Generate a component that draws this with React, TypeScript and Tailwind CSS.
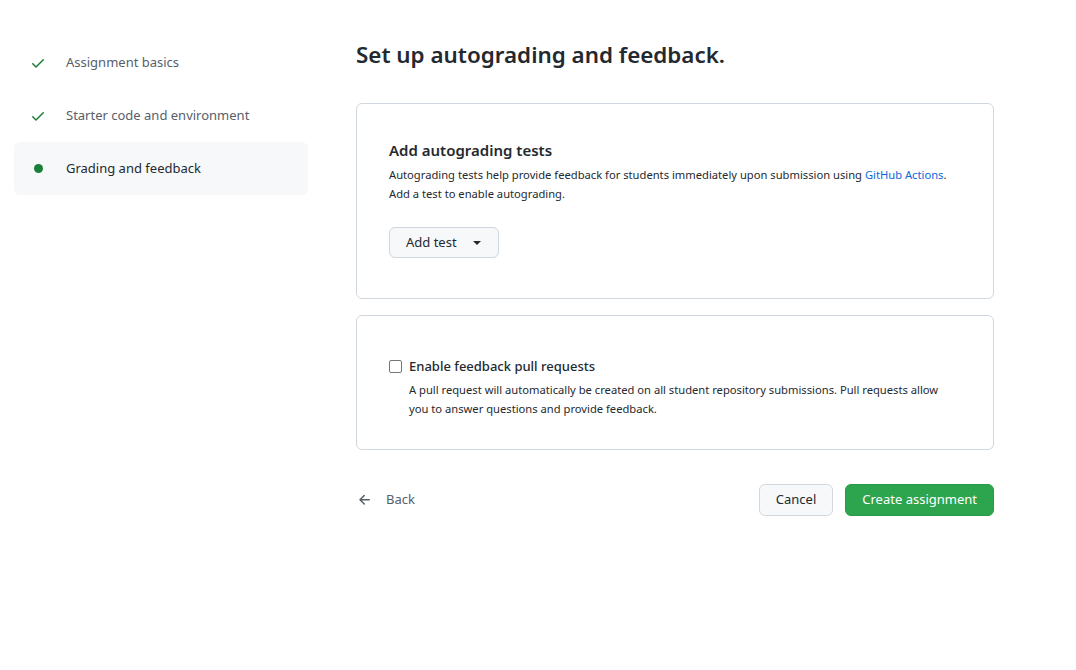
import React from "react";

const font = { fontFamily: '"Noto Sans", "Open Sans", sans-serif' };

function CheckIcon() {
  return (
    <svg width="16" height="16" viewBox="0 0 16 16" fill="#1a7f37">
      <path d="M13.78 4.22a.75.75 0 0 1 0 1.06l-7.25 7.25a.75.75 0 0 1-1.06 0L2.22 9.28a.751.751 0 0 1 .018-1.042.751.751 0 0 1 1.042-.018L6 10.94l6.72-6.72a.75.75 0 0 1 1.06 0Z" />
    </svg>
  );
}

function ArrowLeft() {
  return (
    <svg width="16" height="16" viewBox="0 0 16 16" fill="#57606a">
      <path d="M7.78 12.53a.75.75 0 0 1-1.06 0L2.47 8.28a.75.75 0 0 1 0-1.06l4.25-4.25a.751.751 0 0 1 1.042.018.751.751 0 0 1 .018 1.042L4.81 7h7.44a.75.75 0 0 1 0 1.5H4.81l2.97 2.97a.75.75 0 0 1 0 1.06Z" />
    </svg>
  );
}

const steps = [
  { label: "Assignment basics", done: true },
  { label: "Starter code and environment", done: true },
  { label: "Grading and feedback", done: false },
];

export default function App() {
  return (
    <div className="min-h-[670px] bg-white text-[#24292f] flex px-[14px] pt-[36px]" style={font}>
      {/* Sidebar steps */}
      <nav className="w-[294px] shrink-0 flex flex-col">
        {steps.map((s) => (
          <div
            key={s.label}
            className={`h-[53px] flex items-center rounded-md ${s.done ? "" : "bg-[#f6f8fa]"}`}
          >
            <span className="w-[48px] mr-[4px] flex justify-center">
              {s.done ? <CheckIcon /> : <span className="w-[9px] h-[9px] rounded-full bg-[#1a7f37]" />}
            </span>
            <span className={`text-[13px] ${s.done ? "text-[#57606a]" : "text-[#24292f]"}`}>{s.label}</span>
          </div>
        ))}
      </nav>

      {/* Main */}
      <main className="ml-[48px] w-[638px] flex flex-col">
        <h1 className="mt-[1px] text-[22.4px] leading-[36px] font-semibold">Set up autograding and feedback.</h1>

        <section className="mt-[30px] border border-[#d0d7de] rounded-md px-8 pt-[34px] pb-[40px]">
          <h2 className="text-[15px] leading-[24px] font-semibold">Add autograding tests</h2>
          <p className="mt-[3px] text-[11.2px] leading-[19px]">
            Autograding tests help provide feedback for students immediately upon submission using{" "}
            <span className="text-[#0969da]">GitHub Actions</span>.
            <br />
            Add a test to enable autograding.
          </p>
          <button className="mt-[24px] h-[31px] w-[110px] border border-[#d0d7de] bg-[#f6f8fa] rounded-md flex items-center pl-4 text-[13px] text-[#24292f]">
            Add test
            <span className="ml-[16px] w-0 h-0 border-l-[4px] border-r-[4px] border-t-[4px] border-l-transparent border-r-transparent border-t-[#24292f]" />
          </button>
        </section>

        <section className="mt-4 border border-[#d0d7de] rounded-md px-8 pt-[40px] pb-[31px]">
          <label className="flex items-center gap-[7px] text-[13px] leading-[20px] font-medium">
            <span className="w-[13px] h-[13px] border border-[#767676] rounded-[2px] bg-white" />
            Enable feedback pull requests
          </label>
          <p className="mt-[4px] ml-[20px] text-[11.2px] leading-[19px] pr-[8px]">
            A pull request will automatically be created on all student repository submissions. Pull requests allow
            you to answer questions and provide feedback.
          </p>
        </section>

        <div className="mt-[34px] flex items-center">
          <div className="flex items-center gap-[13px] text-[13px] text-[#57606a] pl-[1px]">
            <ArrowLeft />
            Back
          </div>
          <div className="ml-auto flex items-center gap-3">
            <button className="h-[32px] px-4 border border-[#d0d7de] bg-[#f6f8fa] rounded-md text-[13px] text-[#24292f]">
              Cancel
            </button>
            <button className="h-[32px] px-4 whitespace-nowrap bg-[#2da44e] border border-[#2a9a48] rounded-md text-[13px] text-white">
              Create assignment
            </button>
          </div>
        </div>
      </main>
    </div>
  );
}
